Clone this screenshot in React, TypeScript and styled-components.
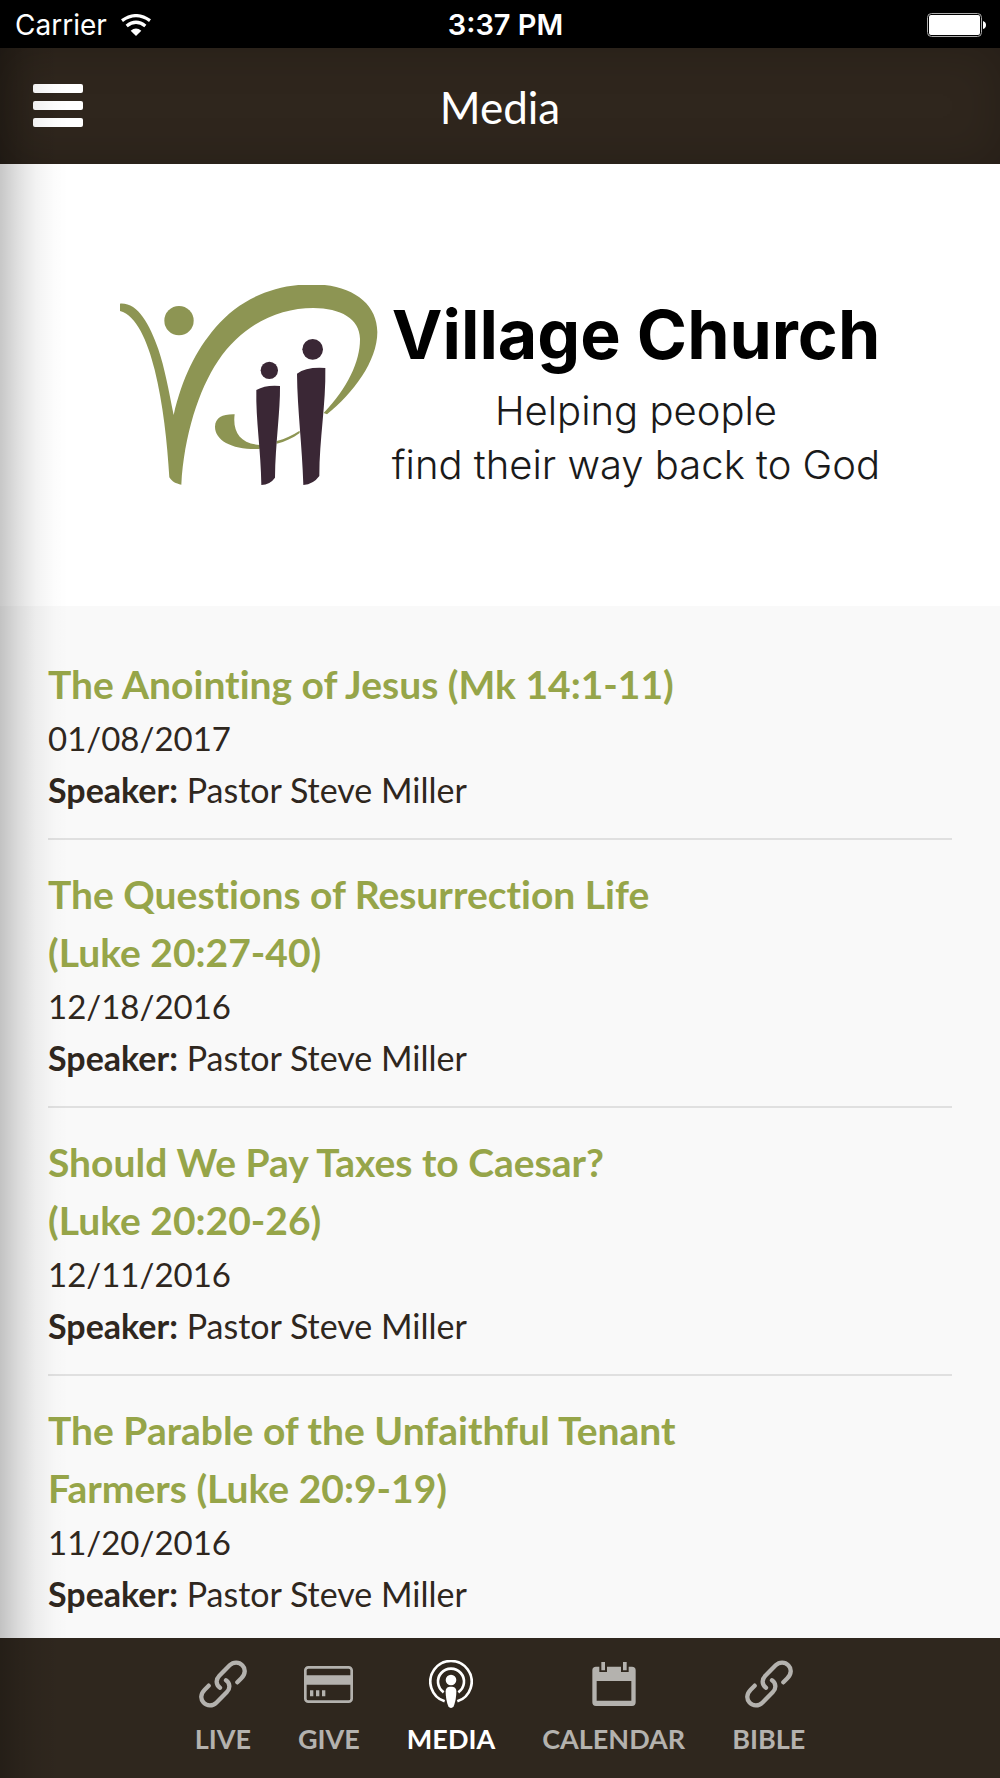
import React from "react";
import styled, { createGlobalStyle } from "styled-components";

const GlobalStyle = createGlobalStyle`
  *, *::before, *::after { box-sizing: border-box; }
  body {
    margin: 0;
    background: #f9f9f9;
    color: #2f271e;
    font-family: Lato, "Open Sans", sans-serif;
    font-variant-ligatures: none;
  }
`;

const Screen = styled.div`
  display: flex;
  flex-direction: column;
  height: 100vh;
  overflow: hidden;
`;

const StatusBar = styled.div`
  display: grid;
  grid-template-columns: 1fr auto 1fr;
  align-items: center;
  flex: none;
  height: 48px;
  padding: 2px 14px 0 15px;
  background: #000;
  color: #fff;
  font: 400 28px/32px Inter, Roboto, sans-serif;
`;

const Carrier = styled.span`
  display: flex;
  align-items: center;
  gap: 14px;
`;

const Clock = styled.time`
  padding-left: 10px;
  font-size: 29px;
  font-weight: 600;
`;

const BatteryIcon = styled.svg`
  justify-self: end;
`;

const AppShell = styled.div`
  position: relative;
  display: flex;
  flex: 1;
  flex-direction: column;
  min-height: 0;
`;

const EdgeShadow = styled.div`
  position: absolute;
  inset: 0 auto 0 0;
  width: 68px;
  pointer-events: none;
  background: linear-gradient(
    to right,
    rgba(0, 0, 0, 0.22) 0%,
    rgba(0, 0, 0, 0.12) 27%,
    rgba(0, 0, 0, 0.05) 52%,
    rgba(0, 0, 0, 0.01) 80%,
    rgba(0, 0, 0, 0) 100%
  );
`;

const Header = styled.header`
  display: grid;
  grid-template-columns: 1fr auto 1fr;
  align-items: center;
  flex: none;
  height: 116px;
  padding: 0 33px;
  background: #2f261d;
  box-shadow: inset 0 0 48px rgba(0, 0, 0, 0.2);
  color: #fff;
`;

const MenuButton = styled.button`
  display: flex;
  flex-direction: column;
  gap: 8px;
  width: 50px;
  padding: 0 0 2px;
  border: 0;
  background: none;
  cursor: pointer;
`;

const MenuBar = styled.span`
  height: 9px;
  border-radius: 2px;
  background: #fff;
`;

const Title = styled.h1`
  margin: 0;
  padding-top: 2px;
  font-size: 44px;
  font-weight: 400;
  line-height: 56px;
`;

const Content = styled.main`
  flex: 1;
  min-height: 0;
  overflow-y: auto;
  scrollbar-width: none;
`;

const Banner = styled.section`
  display: flex;
  align-items: center;
  justify-content: center;
  gap: 14px;
  height: 442px;
  background: #fff;
`;

const BannerText = styled.div`
  display: flex;
  flex-direction: column;
  align-items: center;
  padding-top: 6px;
  color: #000;
  font-family: Inter, Lato, sans-serif;
`;

const ChurchName = styled.p`
  margin: 0;
  font-size: 68px;
  font-weight: 700;
  line-height: 100px;
  white-space: nowrap;
`;

const Tagline = styled.p`
  margin: 0;
  color: #1a1a1a;
  font-size: 40px;
  font-weight: 300;
  line-height: 54px;
  text-align: center;
  white-space: nowrap;
`;

const SermonList = styled.ul`
  margin: 0;
  padding: 24px 48px 0;
  list-style: none;
`;

const SermonItem = styled.li`
  padding: 25px 0 23px;
  border-bottom: 2px solid #e0e0e0;

  &:last-child {
    border-bottom: 0;
  }
`;

const SermonTitle = styled.h2`
  width: 70%;
  margin: 0;
  font-size: 39px;
  font-weight: 700;
  line-height: 58px;
`;

const SermonLink = styled.a`
  color: #96a549;
  text-decoration: none;
`;

const Detail = styled.p`
  margin: 0;
  font-size: 34px;
  line-height: 51px;
`;

const SermonDate = styled.time`
  display: block;
  font-size: 33px;
  line-height: 51px;
`;

const TabBar = styled.nav`
  display: flex;
  justify-content: center;
  gap: 47px;
  flex: none;
  height: 140px;
  padding-top: 22px;
  background: #2f271e;
`;

const Tab = styled.a<{ $active?: boolean }>`
  display: flex;
  flex-direction: column;
  align-items: center;
  gap: 13px;
  color: ${(p) => (p.$active ? "#fff" : "#b4b2ae")};
  font-size: 27px;
  font-weight: 700;
  line-height: 36px;
  text-decoration: none;
`;

const WifiIcon = () => (
  <svg width="30" height="22" viewBox="0 0 90 66" aria-hidden="true">
    <g fill="none" stroke="#fff" strokeWidth="10">
      <path d="M3 20 Q45 -10 87 20" />
      <path d="M17 36 Q45 14 73 36" />
    </g>
    <path d="M29 50 Q45 37 61 50 L45 66 Z" fill="#fff" />
  </svg>
);

const Battery = () => (
  <BatteryIcon width="59" height="24" viewBox="0 0 59 24" aria-hidden="true">
    <rect x="0.5" y="0.5" width="54" height="23" rx="4" fill="none" stroke="#aaa" />
    <rect x="2" y="2" width="51" height="20" rx="2" fill="#fff" />
    <path d="M56 8 Q59 9 59 12 Q59 15 56 16 Z" fill="#fff" />
  </BatteryIcon>
);

const VillageMark = () => (
  <svg width="258" height="201" viewBox="63 75 774 603" aria-hidden="true">
    <g fill="#8d9553">
      <path d="M63 131 C115 127 151 190 178 268 C197 324 209 390 224 465 C250 354 289 274 350 202 C423 116 526 73 640 73 C757 73 835 129 835 216 C835 304 762 400 684 463 L674 459 C747 383 784 302 783 236 C782 177 725 144 643 144 C536 144 430 195 357 303 C299 389 255 528 247 674 C230 671 219 665 211 652 C205 548 192 431 167 329 C146 244 112 166 63 153 Z" />
      <circle cx="240" cy="182" r="44" />
      <path d="M407 463 C400 515 424 552 484 555 L482 567 C401 570 348 542 348 500 C349 472 372 462 407 463 Z" />
      <path d="M533 543 C559 536 580 526 602 512 L602 519 C580 535 558 545 533 551 Z" />
    </g>
    <g fill="#3a2735">
      <circle cx="511" cy="331" r="26" />
      <circle cx="641" cy="268" r="31" />
      <path d="M472 390 Q500 374 543 378 C544 454 529 552 528 653 Q513 674 487 675 C486 574 470 480 472 390 Z" />
      <path d="M594 341 Q622 320 679 324 C681 432 661 538 661 648 Q643 673 613 675 C610 560 595 450 594 341 Z" />
    </g>
  </svg>
);

const LinkIcon = () => (
  <svg width="48" height="48" viewBox="0 0 144 144" aria-hidden="true">
    <g fill="none" stroke="currentColor" strokeWidth="13" strokeLinecap="round">
      <path d="M115 67 L127 55 C140 42 140 26 130 16 C120 5 103 5 92 16 L61 47 C50 58 50 74 63 83" />
      <path d="M29 77 L17 89 C4 102 4 118 14 128 C24 139 41 139 52 128 L83 97 C94 86 94 70 81 61" />
    </g>
  </svg>
);

const CardIcon = () => (
  <svg width="49" height="48" viewBox="0 0 147 144" aria-hidden="true">
    <rect x="4" y="22" width="139" height="103" rx="9" fill="none" stroke="currentColor" strokeWidth="8" />
    <path
      d="M4 46 H143 V74 H4 Z M18 91 h10 v18 h-10 Z M36 91 h10 v18 h-10 Z M54 91 h10 v18 h-10 Z"
      fill="currentColor"
    />
  </svg>
);

const PodcastIcon = () => (
  <svg width="44" height="48" viewBox="0 2 132 144" aria-hidden="true">
    <g fill="none" stroke="currentColor" strokeWidth="8">
      <path d="M47 126 A62 62 0 1 1 85 126" />
      <path d="M44 99 A39 39 0 1 1 88 99" />
    </g>
    <circle cx="66" cy="62" r="16" fill="currentColor" />
    <path
      d="M66 82 C76 82 82 86 82 96 C82 115 78 132 74 141 Q71 146 66 146 Q61 146 58 141 C54 132 50 115 50 96 C50 86 56 82 66 82 Z"
      fill="currentColor"
    />
  </svg>
);

const CalendarIcon = () => (
  <svg width="44" height="48" viewBox="0 0 132 144" aria-hidden="true">
    <path
      fill="currentColor"
      fillRule="evenodd"
      d="M12 20 H22 V36 H45 V20 H87 V36 H110 V20 H120 Q131 20 131 31 V127 Q131 138 120 138 H12 Q1 138 1 127 V31 Q1 20 12 20 Z M14 63 V122 H118 V63 Z"
    />
    <path fill="currentColor" d="M28 6 h11 v25 h-11 Z M93 6 h11 v25 h-11 Z" />
  </svg>
);

const sermons = [
  { title: "The Anointing of Jesus (Mk 14:1-11)", date: "01/08/2017", iso: "2017-01-08" },
  { title: "The Questions of Resurrection Life (Luke 20:27-40)", date: "12/18/2016", iso: "2016-12-18" },
  { title: "Should We Pay Taxes to Caesar? (Luke 20:20-26)", date: "12/11/2016", iso: "2016-12-11" },
  { title: "The Parable of the Unfaithful Tenant Farmers (Luke 20:9-19)", date: "11/20/2016", iso: "2016-11-20" },
];

const tabs = [
  { label: "LIVE", Icon: LinkIcon },
  { label: "GIVE", Icon: CardIcon },
  { label: "MEDIA", Icon: PodcastIcon, active: true },
  { label: "CALENDAR", Icon: CalendarIcon },
  { label: "BIBLE", Icon: LinkIcon },
];

export default function App() {
  return (
    <Screen>
      <GlobalStyle />
      <StatusBar>
        <Carrier>
          Carrier
          <WifiIcon />
        </Carrier>
        <Clock>3:37 PM</Clock>
        <Battery />
      </StatusBar>
      <AppShell>
        <Header>
          <MenuButton type="button" aria-label="Menu">
            <MenuBar />
            <MenuBar />
            <MenuBar />
          </MenuButton>
          <Title>Media</Title>
        </Header>
        <Content>
          <Banner>
            <VillageMark />
            <BannerText>
              <ChurchName>Village Church</ChurchName>
              <Tagline>
                Helping people
                <br />
                find their way back to God
              </Tagline>
            </BannerText>
          </Banner>
          <SermonList>
            {sermons.map((s) => (
              <SermonItem key={s.iso}>
                <SermonTitle>
                  <SermonLink href={`#${s.iso}`}>{s.title}</SermonLink>
                </SermonTitle>
                <SermonDate dateTime={s.iso}>{s.date}</SermonDate>
                <Detail>
                  <strong>Speaker:</strong> Pastor Steve Miller
                </Detail>
              </SermonItem>
            ))}
          </SermonList>
        </Content>
        <TabBar>
          {tabs.map(({ label, Icon, active }) => (
            <Tab key={label} href={`#${label.toLowerCase()}`} $active={active} aria-current={active ? "page" : undefined}>
              <Icon />
              {label}
            </Tab>
          ))}
        </TabBar>
        <EdgeShadow />
      </AppShell>
    </Screen>
  );
}
